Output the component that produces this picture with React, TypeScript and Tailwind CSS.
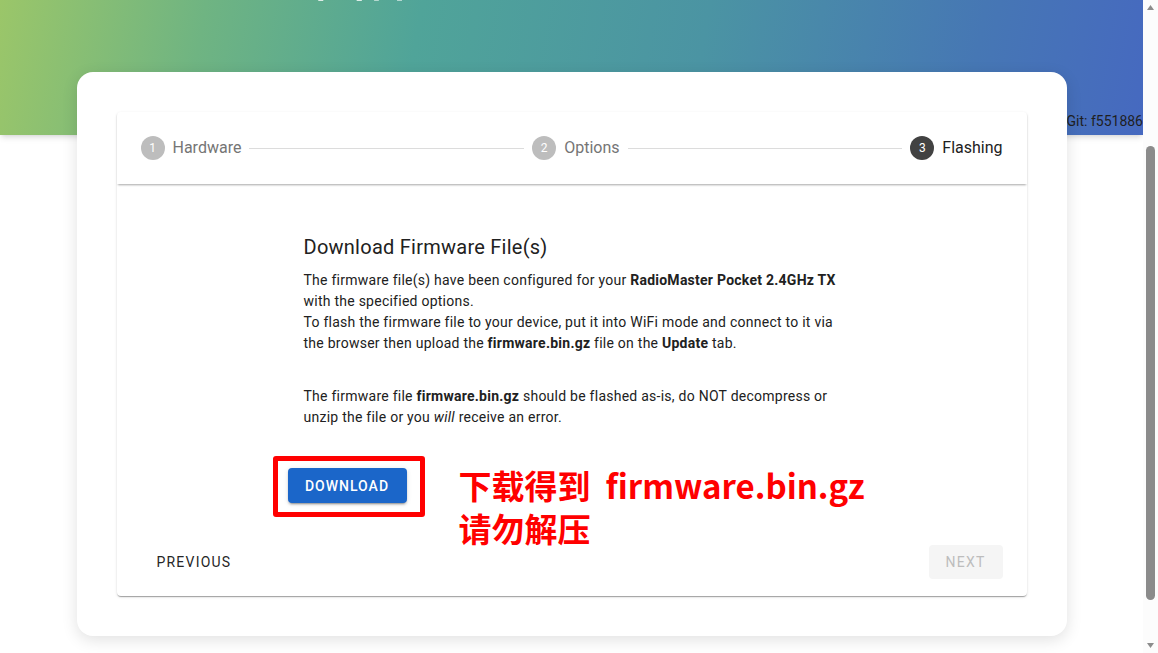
import React from "react";

const steps = [
  { n: 1, label: "Hardware", active: false },
  { n: 2, label: "Options", active: false },
  { n: 3, label: "Flashing", active: true },
];

export default function App() {
  const scrollRef = React.useRef<HTMLDivElement>(null);

  React.useLayoutEffect(() => {
    if (scrollRef.current) scrollRef.current.scrollTop = 190;
  }, []);

  return (
    <div className="flex h-screen bg-white font-['Roboto','Noto_Sans_CJK_SC',sans-serif]">
      <div ref={scrollRef} className="flex-1 overflow-hidden">
        {/* Header */}
        <header className="h-[325px] flex flex-col justify-between bg-[linear-gradient(100deg,#a2c965_0%,#6fb482_20%,#50a499_38%,#4b94a3_62%,#4677b4_85%,#4669c0_100%)] shadow-md">
          <div className="pt-[134px] pl-[314px]">
            <h1 className="font-['Noto_Sans_CJK_SC',sans-serif] text-[52px] leading-[60px] font-medium text-white">
              固件
            </h1>
          </div>
          <div className="flex justify-end pb-[4px]">
            <span className="text-sm text-[#1f1f1f]">Git: f551886</span>
          </div>
        </header>

        {/* Card */}
        <div className="relative mx-auto -mt-[63px] mb-[70px] w-[990px] rounded-2xl bg-white p-10 shadow-[0_4px_16px_rgba(0,0,0,0.12)]">
          <div className="rounded bg-white shadow-[0_2px_1px_-1px_rgba(0,0,0,0.2),0_1px_1px_rgba(0,0,0,0.14),0_1px_3px_rgba(0,0,0,0.12)]">
            {/* Stepper */}
            <div className="relative flex h-[72px] items-center px-6 shadow-[0_2px_2px_-1px_rgba(0,0,0,0.35)]">
              {steps.map((s, i) => (
                <React.Fragment key={s.n}>
                  <div className="flex items-center gap-2">
                    <span
                      className={`flex h-6 w-6 items-center justify-center rounded-full text-xs text-white ${
                        s.active ? "bg-[#424242]" : "bg-[#bdbdbd]"
                      }`}
                    >
                      {s.n}
                    </span>
                    <span
                      className={`text-base ${
                        s.active ? "text-[#212121]" : "text-[#757575]"
                      }`}
                    >
                      {s.label}
                    </span>
                  </div>
                  {i < steps.length - 1 && (
                    <div className="mx-2 h-px flex-1 bg-[#dcdcdc]" />
                  )}
                </React.Fragment>
              ))}
            </div>

            {/* Body */}
            <div className="pt-[47px]">
              <div className="mx-auto w-[536px] text-sm text-[#212121]">
                <h2 className="text-xl leading-8 tracking-[0.25px] text-[#212121]">
                  Download Firmware File(s)
                </h2>
                <div className="tracking-[0.25px]">
                  <p className="mt-[7px] whitespace-nowrap leading-[21px]">
                    The firmware file(s) have been configured for your{" "}
                    <b>RadioMaster Pocket 2.4GHz TX</b>
                    <br />
                    with the specified options.
                    <br />
                    To flash the firmware file to your device, put it into WiFi
                    mode and connect to it via
                    <br />
                    the browser then upload the <b>firmware.bin.gz</b> file on
                    the <b>Update</b> tab.
                  </p>
                  <p className="mt-[32px] whitespace-nowrap leading-[21px]">
                    The firmware file <b>firmware.bin.gz</b> should be flashed
                    as-is, do NOT decompress or
                    <br />
                    unzip the file or you <i>will</i> receive an error.
                  </p>
                </div>

                <div className="relative -ml-4 mt-[40px] w-fit">
                  <button className="h-[35px] w-[119px] rounded bg-[#1b66c9] text-sm font-medium uppercase tracking-[1px] text-white shadow-[0_3px_1px_-2px_rgba(0,0,0,0.2),0_2px_2px_rgba(0,0,0,0.14),0_1px_5px_rgba(0,0,0,0.12)]">
                    Download
                  </button>
                  {/* annotation */}
                  <div className="pointer-events-none absolute -left-[15px] -top-[12px] h-[61px] w-[152px] rounded-[3px] border-[5px] border-[#ff0000]" />
                  <div className="pointer-events-none absolute left-[171px] -top-[4px] whitespace-nowrap font-['Noto_Sans_CJK_SC',sans-serif] text-[33px] font-bold leading-[43px] text-[#ff0000]">
                    下载得到&nbsp;&nbsp;firmware.bin.gz
                    <br />
                    请勿解压
                  </div>
                </div>
              </div>

              {/* Footer */}
              <div className="flex items-center justify-between px-6 pb-[17px] pt-[42px]">
                <button className="h-[34px] rounded px-4 text-sm font-normal uppercase tracking-[1.2px] text-[#262626]">
                  Previous
                </button>
                <button
                  disabled
                  className="h-[34px] rounded bg-[#f5f5f5] px-[17px] text-sm font-normal uppercase tracking-[1.2px] text-[#bdbdbd]"
                >
                  Next
                </button>
              </div>
            </div>
          </div>
        </div>
      </div>

      {/* Scrollbar */}
      <div className="flex w-[15px] shrink-0 flex-col items-center bg-[#fcfcfc]">
        <svg width="9" height="15" viewBox="0 0 9 15" className="shrink-0">
          <path d="M1 10 L4.5 5 L8 10 Z" fill="#8c8c8c" />
        </svg>
        <div className="mt-[131px] h-[454px] w-[9px] rounded-full bg-[#8b8b8b]" />
        <div className="flex-1" />
        <svg width="9" height="15" viewBox="0 0 9 15" className="shrink-0">
          <path d="M1 5 L8 5 L4.5 10 Z" fill="#8c8c8c" />
        </svg>
      </div>
    </div>
  );
}
